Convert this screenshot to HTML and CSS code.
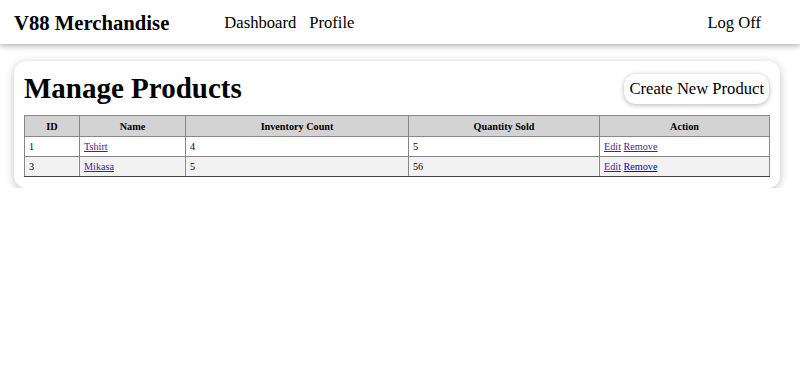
FILE: index.html
```html
<!DOCTYPE html>
<html lang="en">
<head>
<meta charset="UTF-8">
<meta name="viewport" content="width=device-width, initial-scale=1.0">
<title>Manage Products</title>
<link rel="stylesheet" href="styles.css">
</head>
<body>
<div class="header">
  <span class="brand">V88 Merchandise</span>
  <div class="nav">
    <a href="#" class="nav-link">Dashboard</a>
    <a href="#" class="nav-link">Profile</a>
  </div>
  <a href="#" class="nav-link logoff">Log Off</a>
</div>

<div class="card">
  <div class="card-top">
    <h1>Manage Products</h1>
    <button class="create-btn">Create New Product</button>
  </div>

  <table class="products">
    <colgroup>
      <col class="c-id">
      <col class="c-name">
      <col class="c-inv">
      <col class="c-sold">
      <col class="c-action">
    </colgroup>
    <tr>
      <th>ID</th>
      <th>Name</th>
      <th>Inventory Count</th>
      <th>Quantity Sold</th>
      <th class="action">Action</th>
    </tr>
    <tr>
      <td>1</td>
      <td><a href="#" class="visited">Tshirt</a></td>
      <td>4</td>
      <td>5</td>
      <td class="action"><a href="#" class="visited">Edit</a> <a href="#" class="visited">Remove</a></td>
    </tr>
    <tr class="alt">
      <td>3</td>
      <td><a href="#" class="visited">Mikasa</a></td>
      <td>5</td>
      <td>56</td>
      <td class="action"><a href="#" class="visited">Edit</a> <a href="#" class="fresh">Remove</a></td>
    </tr>
  </table>
</div>
</body>
</html>
```

FILE: styles.css
```css
body {
  font-family: "Liberation Serif", "Times New Roman", serif;
  background-color: #fff;
  margin: 0;
  padding: 0;
  color: #000;
}

.header {
  display: flex;
  align-items: center;
  height: 42px;
  padding: 2px 39px 0 14px;
  background-color: #fff;
  box-shadow: 0 2px 6px rgba(0, 0, 0, 0.3);
}

.brand {
  font-size: 20.7px;
  font-weight: bold;
}

.nav {
  display: flex;
  gap: 13px;
  margin-left: 55px;
  flex: 1;
}

.nav-link {
  font-size: 16.6px;
  color: #000;
  text-decoration: none;
}

.card {
  margin: 17px 20px 0 14px;
  padding: 11px 10px 11px 10px;
  background-color: #fff;
  border-radius: 12px;
  box-shadow: 0 2px 8px rgba(0, 0, 0, 0.25);
}

.card-top {
  display: flex;
  justify-content: space-between;
  align-items: center;
  margin-bottom: 10px;
}

h1 {
  margin: 0;
  font-size: 29px;
  line-height: 33px;
}

.create-btn {
  font-family: inherit;
  font-size: 16.6px;
  padding: 5px 5px;
  margin-right: 1px;
  background-color: #fff;
  border: none;
  border-radius: 12px;
  box-shadow: 0 1px 5px rgba(0, 0, 0, 0.3);
  color: #000;
}

.products {
  width: 100%;
  border-collapse: collapse;
  border: 1px solid #444;
  font-size: 10.2px;
}

.c-id { width: 55px; }
.c-name { width: 106px; }
.c-inv { width: 223px; }
.c-sold { width: 191px; }

.products th,
.products td {
  border: 1px solid #888;
  padding: 0 4px;
  height: 19px;
  text-align: left;
}

.products th {
  background-color: #d3d3d3;
  text-align: center;
  height: 20px;
}

.products .action {
  border-left: 1.5px solid #333;
}

.products tr:last-child td {
  border-bottom: 1px solid #444;
}

.alt td {
  background-color: #f2f2f2;
}

.visited {
  color: #551a8b;
}

.fresh {
  color: #0000ee;
}
```
